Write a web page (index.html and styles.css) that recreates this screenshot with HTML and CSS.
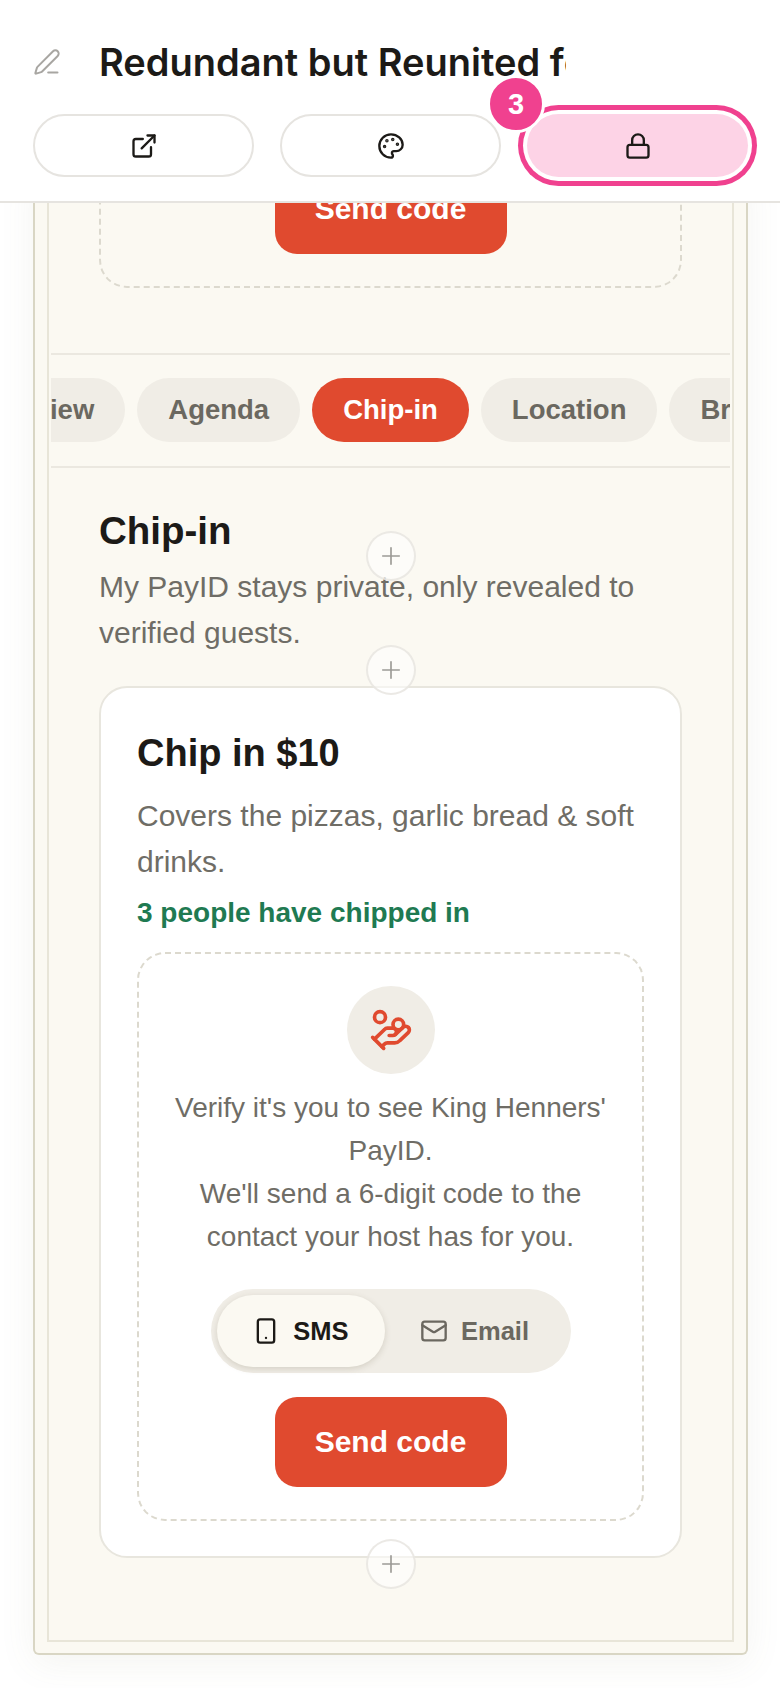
FILE: index.html
```html
<!DOCTYPE html>
<html lang="en">
<head>
    <meta charset="UTF-8">
    <meta name="viewport" content="width=device-width, initial-scale=1.0">
    <title>Redundant but Reunited</title>
    <link rel="stylesheet" href="styles.css">
</head>
<body>
    <header class="topbar">
        <div class="title-row">
            <svg class="icon pencil" viewBox="0 0 24 24"><path d="M13 21h8"/><path d="M21.174 6.812a1 1 0 0 0-3.986-3.987L3.842 16.174a2 2 0 0 0-.5.83l-1.321 4.352a.5.5 0 0 0 .623.622l4.353-1.32a2 2 0 0 0 .83-.497z"/></svg>
            <h1 class="page-title">Redundant but Reunited for one night only</h1>
        </div>
        <div class="actions">
            <button class="action">
                <svg class="icon" viewBox="0 0 24 24"><path d="M15 3h6v6"/><path d="M10 14 21 3"/><path d="M18 13v6a2 2 0 0 1-2 2H5a2 2 0 0 1-2-2V8a2 2 0 0 1 2-2h6"/></svg>
            </button>
            <button class="action">
                <svg class="icon" viewBox="0 0 24 24"><circle class="dot" cx="13.5" cy="6.5" r=".5"/><circle class="dot" cx="17.5" cy="10.5" r=".5"/><circle class="dot" cx="8.5" cy="7.5" r=".5"/><circle class="dot" cx="6.5" cy="12.5" r=".5"/><path d="M12 2C6.5 2 2 6.5 2 12s4.5 10 10 10c.926 0 1.648-.746 1.648-1.688 0-.437-.18-.835-.437-1.125-.29-.289-.438-.652-.438-1.125a1.64 1.64 0 0 1 1.668-1.668h1.996c3.051 0 5.555-2.503 5.555-5.554C21.965 6.012 17.461 2 12 2z"/></svg>
            </button>
            <button class="action action-locked">
                <span class="badge">3</span>
                <svg class="icon" viewBox="0 0 24 24"><rect x="3" y="11" width="18" height="11" rx="2"/><path d="M7 11V7a5 5 0 0 1 10 0v4"/></svg>
            </button>
        </div>
    </header>

    <main class="canvas">
        <div class="frame">
            <div class="frame-inner">
                <div class="prev-block">
                    <div class="verify verify-prev">
                        <button class="send">Send code</button>
                    </div>
                </div>

                <nav class="tabs">
                    <div class="tabs-track">
                        <span class="tab">Overview</span>
                        <span class="tab">Agenda</span>
                        <span class="tab tab-active">Chip-in</span>
                        <span class="tab">Location</span>
                        <span class="tab">Bring</span>
                    </div>
                </nav>

                <section class="section">
                    <h2 class="section-title">Chip-in</h2>
                    <button class="add add-title"><svg viewBox="0 0 24 24"><path d="M12 3v18M3 12h18"/></svg></button>
                    <p class="section-sub">My PayID stays private, only revealed to verified guests.</p>
                    <button class="add add-sub"><svg viewBox="0 0 24 24"><path d="M12 3v18M3 12h18"/></svg></button>

                    <div class="card">
                        <h3 class="card-title">Chip in $10</h3>
                        <p class="card-text">Covers the pizzas, garlic bread &amp; soft drinks.</p>
                        <p class="card-count">3 people have chipped in</p>
                        <div class="verify">
                            <div class="verify-icon">
                                <svg class="icon" viewBox="0 0 24 24"><path d="M11 15h2a2 2 0 1 0 0-4h-3c-.6 0-1.1.2-1.4.6L3 17"/><path d="m7 21 1.6-1.4c.3-.4.8-.6 1.4-.6h4c1.1 0 2.1-.4 2.8-1.2l4.6-4.4a2 2 0 0 0-2.75-2.91l-4.2 3.9"/><path d="m2 16 6 6"/><circle cx="16" cy="9" r="2.9"/><circle cx="6" cy="5" r="3"/></svg>
                            </div>
                            <p class="verify-text">Verify it's you to see King Henners' PayID.<br>We'll send a 6-digit code to the contact your host has for you.</p>
                            <div class="toggle">
                                <span class="toggle-opt toggle-on">
                                    <svg class="icon" viewBox="0 0 24 24"><rect x="5" y="2" width="14" height="20" rx="2"/><path d="M12 18h.01"/></svg>
                                    SMS
                                </span>
                                <span class="toggle-opt">
                                    <svg class="icon" viewBox="0 0 24 24"><rect x="2" y="4" width="20" height="16" rx="2"/><path d="m22 7-8.97 5.7a1.94 1.94 0 0 1-2.06 0L2 7"/></svg>
                                    Email
                                </span>
                            </div>
                            <button class="send">Send code</button>
                        </div>
                        <button class="add add-card"><svg viewBox="0 0 24 24"><path d="M12 3v18M3 12h18"/></svg></button>
                    </div>
                </section>
            </div>
        </div>
    </main>
</body>
</html>
```

FILE: styles.css
```css
* { box-sizing: border-box; }
body { margin: 0; height: 1688px; overflow: hidden; background: #fff; color: #1c1a17; font-family: "Liberation Sans", Arial, sans-serif; }
button { font-family: inherit; cursor: pointer; }
p, h1, h2, h3 { margin: 0; }

.icon { width: 28px; height: 28px; fill: none; stroke: currentColor; stroke-width: 2; stroke-linecap: round; stroke-linejoin: round; flex: none; }
.dot { fill: currentColor; }

/* top bar */
.topbar { position: relative; z-index: 3; height: 203px; padding: 40px 32px 0 33px; background: #fff; border-bottom: 2px solid #e6e4e0; }
.title-row { display: flex; align-items: center; gap: 38px; height: 44px; }
.pencil { width: 28px; height: 28px; color: #a8a6a2; stroke-width: 1.7; }
.page-title { width: 467px; overflow: hidden; white-space: nowrap; font-family: Inter, sans-serif; font-size: 38px; font-weight: 600; line-height: 44px; color: #1c1a17; }
.actions { display: grid; grid-template-columns: repeat(3, 1fr); gap: 26px; margin-top: 30px; }
.action { position: relative; display: flex; align-items: center; justify-content: center; height: 63px; padding: 0; color: #1c1a17; background: #fff; border: 2px solid #e6e4e0; border-radius: 32px; }
.action-locked { background: #fdd3e6; border: 0; box-shadow: 0 0 0 4px #fff, 0 0 0 9px #f0418f; }
.badge { position: absolute; top: -39px; left: -40px; z-index: 1; display: flex; align-items: center; justify-content: center; width: 58px; height: 58px; font-size: 29px; font-weight: 700; color: #fff; background: #f0418f; border: 3px solid #fff; border-radius: 50%; }

/* canvas */
.canvas { position: relative; margin-top: -39px; padding: 0 32px 0 33px; }
.frame { padding: 0 12px 11px; background: #fbf9f2; border: 2px solid #d9d6c4; border-top: 0; border-radius: 0 0 6px 6px; box-shadow: 0 8px 36px rgba(120, 110, 80, .08); }
.frame-inner { padding: 0 0 82px; border: 2px solid #e8e5d8; border-top: 0; }

.prev-block { padding: 0 50px; }
.verify { padding: 32px 32px 32px; text-align: center; border: 2px dashed #dcd9ce; border-radius: 28px; }
.verify-prev { padding: 0 32px 32px; border-top: 0; border-radius: 0 0 28px 28px; }
.send { display: block; width: 232px; height: 90px; margin: 0 auto; padding: 0; font-size: 30px; font-weight: 700; color: #fff; background: #e04a2f; border: 0; border-radius: 22px; }

/* tabs */
.tabs { margin: 65px 2px 0; padding: 23px 0 24px; overflow: hidden; border-top: 2px solid #ebe8e0; border-bottom: 2px solid #ebe8e0; }
.tabs-track { display: flex; gap: 12px; margin-left: -110px; }
.tab { flex: none; padding: 0 31px; font-size: 27.5px; font-weight: 700; line-height: 64px; color: #6b6860; background: #f0ede6; border-radius: 32px; }
.tab-active { color: #fff; background: #e04a2f; }

/* chip-in section */
.section { position: relative; padding: 40px 50px 0; }
.section-title { font-size: 38.5px; font-weight: 700; line-height: 46px; }
.section-sub { margin-top: 10px; font-size: 30px; line-height: 46px; color: #6f6d66; }
.add { position: absolute; left: 50%; z-index: 2; display: flex; align-items: center; justify-content: center; width: 50px; height: 50px; margin-left: -25px; padding: 0; background: rgba(255, 255, 255, .5); border: 2px solid rgba(230, 228, 222, .8); border-radius: 50%; }
.add svg { width: 22px; height: 22px; fill: none; stroke: #9c9a96; stroke-width: 1.8; stroke-linecap: round; }
.add-title { top: 63px; }
.add-sub { top: 177px; }
.add-card { bottom: -33px; }

.card { position: relative; margin-top: 30px; padding: 42px 36px 35px; background: #fff; border: 2px solid #e8e6de; border-radius: 28px; }
.card-title { font-size: 38px; font-weight: 700; line-height: 46px; }
.card-text { margin-top: 17px; font-size: 30px; line-height: 46px; color: #6f6d66; }
.card-count { margin-top: 5px; font-size: 28px; font-weight: 700; line-height: 46px; color: #1f7a52; }
.card .verify { margin-top: 16px; }

.verify-icon { display: flex; align-items: center; justify-content: center; width: 88px; height: 88px; margin: 0 auto; color: #e04a2f; background: #f0ede6; border-radius: 50%; }
.verify-icon .icon { width: 44px; height: 44px; stroke-width: 2; }
.verify-text { margin-top: 12px; font-size: 28px; line-height: 43px; color: #6f6d66; }
.toggle { display: flex; width: 360px; height: 84px; margin: 31px auto 24px; padding: 6px; background: #f0ede6; border-radius: 42px; }
.toggle-opt { display: flex; align-items: center; justify-content: center; gap: 13px; flex: 1; font-size: 25.5px; font-weight: 700; color: #6b6860; border-radius: 36px; }
.toggle-on { flex: none; width: 168px; color: #1c1a17; background: #fbf9f2; box-shadow: 0 2px 6px rgba(90, 80, 50, .18); }
```
